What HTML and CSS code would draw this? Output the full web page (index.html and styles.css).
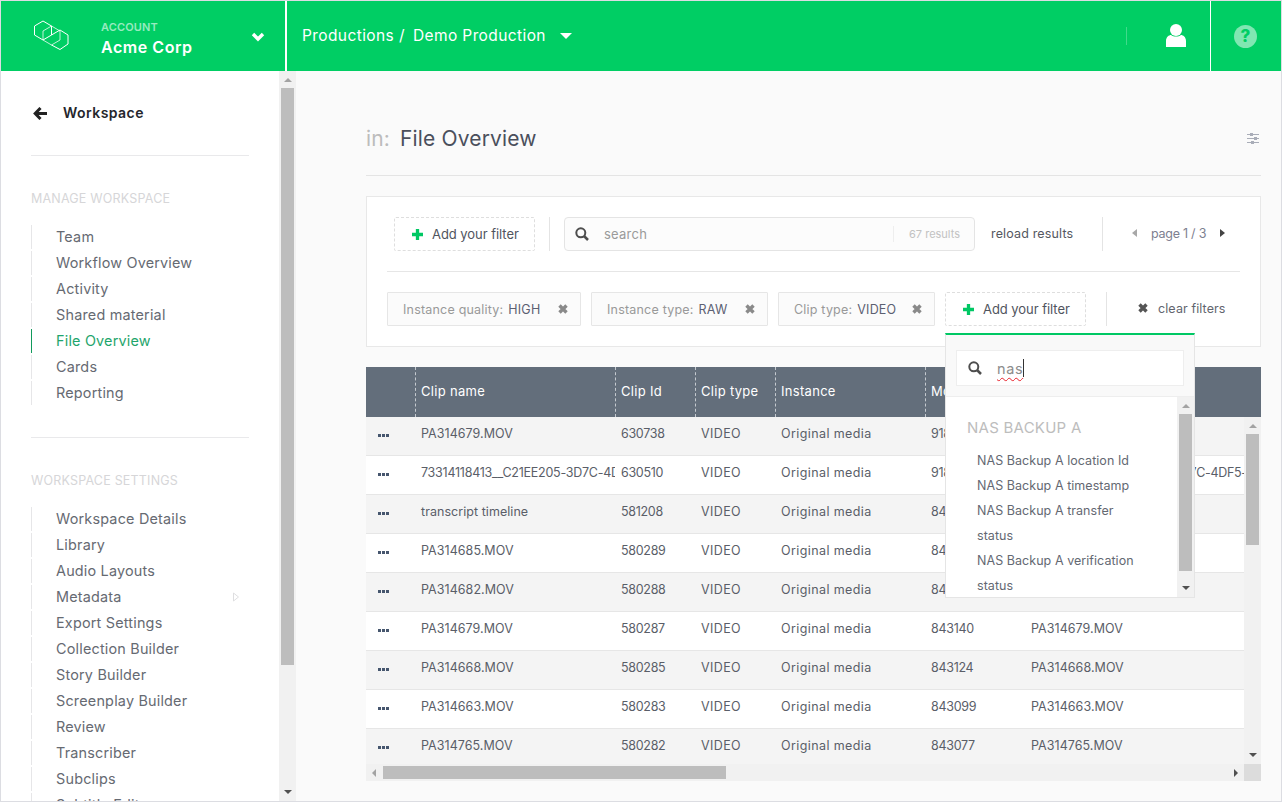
FILE: index.html
```html
<!DOCTYPE html>
<html lang="en">
<head>
<meta charset="utf-8">
<title>File Overview</title>
<link rel="stylesheet" href="styles.css">
</head>
<body>
<div class="app">
  <header class="topbar">
    <div class="account">
      <svg class="logo" viewBox="32 20 38 33" width="38" height="33"><g fill="none" stroke="#fff" stroke-width="1"><path d="M34.5 27L43 22l8.500 5v9L43 41l-8.500-5z"/><path d="M43 32l8.500-5 8.500 5v9l-8.500 5L43 41z" stroke-opacity=".75"/><path d="M51.500 36l8.500-5 8 5v9l-8 5.500-8.500-4.500" /></g></svg>
      <div class="account-text">
        <div class="account-label">ACCOUNT</div>
        <div class="account-name">Acme Corp</div>
      </div>
      <svg class="chev" viewBox="0 0 14 10" width="14" height="10"><path d="M2 2l5 5 5-5" fill="none" stroke="#fff" stroke-width="3.400"/></svg>
    </div>
    <nav class="crumbs">
      <span class="crumb">Productions /</span>
      <span class="crumb crumb-current">Demo Production</span>
      <span class="caret"></span>
    </nav>
    <div class="top-right">
      <span class="thin-rule"></span>
      <svg class="user" viewBox="0 0 20 23" width="20" height="23"><circle cx="10" cy="6" r="6" fill="#fff"/><path d="M0 23v-6c0-4 3-6 5-6 1.500 1 3 1.500 5 1.500s3.500-.5 5-1.500c2 0 5 2 5 6v6z" fill="#fff"/></svg>
      <div class="help"><span class="help-dot">?</span></div>
    </div>
  </header>

  <div class="content">
    <aside class="sidebar">
      <div class="side-inner">
        <div class="back">
          <svg viewBox="0 0 14 13" width="14" height="13"><path d="M7.500 1L2.200 6.500l5.300 5.500M2.500 6.500H14" fill="none" stroke="#222" stroke-width="3"/></svg>
          <span>Workspace</span>
        </div>
        <div class="side-head">MANAGE WORKSPACE</div>
        <ul class="side-list">
          <li>Team</li><li>Workflow Overview</li><li>Activity</li><li>Shared material</li>
          <li class="active">File Overview</li><li>Cards</li><li>Reporting</li>
        </ul>
        <div class="side-head side-head-2">WORKSPACE SETTINGS</div>
        <ul class="side-list">
          <li>Workspace Details</li><li>Library</li><li>Audio Layouts</li>
          <li>Metadata<svg class="sub-arrow" viewBox="0 0 7 10" width="7" height="10"><path d="M.5 1l5 4-5 4z" fill="none" stroke="#dedee0"/></svg></li>
          <li>Export Settings</li><li>Collection Builder</li><li>Story Builder</li><li>Screenplay Builder</li>
          <li>Review</li><li>Transcriber</li><li>Subclips</li><li>Subtitle Editor</li>
        </ul>
      </div>
      <div class="vbar">
        <span class="arr arr-up"></span><span class="thumb thumb-side"></span><span class="fill"></span><span class="arr arr-down"></span>
      </div>
    </aside>

    <main class="main">
      <div class="title-row">
        <h1 class="title"><span class="title-in">in:</span> File Overview</h1>
        <svg class="sliders" viewBox="0 0 12 11" width="12" height="11"><g fill="#a9adb8"><path d="M0 1.500h12M0 5.500h12M0 9.500h12" stroke="#a9adb8" stroke-width="1" fill="none"/><rect x="3" y="0" width="3" height="3"/><rect x="7" y="4" width="3" height="3"/><rect x="4" y="8" width="3" height="3"/></g></svg>
      </div>

      <section class="panel">
        <div class="panel-top">
          <div class="add-filter">
            <svg class="plus" viewBox="0 0 10 10" width="11" height="11"><path d="M5 0v10M0 5h10" stroke="#00c864" stroke-width="3"/></svg>
            <span>Add your filter</span>
          </div>
          <span class="vrule vrule-a"></span>
          <div class="search">
            <svg class="mag" viewBox="0 0 14 14" width="14" height="14"><circle cx="5.800" cy="5.800" r="4.500" fill="none" stroke="#4e4e4e" stroke-width="2"/><path d="M9 9l4 4" stroke="#4e4e4e" stroke-width="2.500"/></svg>
            <span class="search-ph">search</span>
            <span class="search-count">67 results</span>
          </div>
          <span class="reload">reload results</span>
          <span class="vrule vrule-b"></span>
          <div class="pager">
            <span class="tri tri-left tri-dim"></span>
            <span class="page-text">page 1 / 3</span>
            <span class="tri tri-right"></span>
          </div>
        </div>
        <div class="panel-bottom">
          <div class="chip chip-a"><span class="chip-key">Instance quality:</span><span class="chip-val">HIGH</span><svg class="x x-grey" viewBox="0 0 10 10" width="10" height="10"><path d="M1.500 1.500l7 7M8.500 1.500l-7 7"/></svg></div>
          <div class="chip chip-b"><span class="chip-key">Instance type:</span><span class="chip-val">RAW</span><svg class="x x-grey" viewBox="0 0 10 10" width="10" height="10"><path d="M1.500 1.500l7 7M8.500 1.500l-7 7"/></svg></div>
          <div class="chip chip-c"><span class="chip-key">Clip type:</span><span class="chip-val">VIDEO</span><svg class="x x-grey" viewBox="0 0 10 10" width="10" height="10"><path d="M1.500 1.500l7 7M8.500 1.500l-7 7"/></svg></div>
          <div class="add-filter">
            <svg class="plus" viewBox="0 0 10 10" width="11" height="11"><path d="M5 0v10M0 5h10" stroke="#00c864" stroke-width="3"/></svg>
            <span>Add your filter</span>
          </div>
          <span class="vrule vrule-c"></span>
          <div class="clear">
            <svg class="x x-dark" viewBox="0 0 10 10" width="10" height="10"><path d="M1.500 1.500l7 7M8.500 1.500l-7 7"/></svg>
            <span>clear filters</span>
          </div>
        </div>

        <div class="popover">
          <div class="pop-search">
            <div class="pop-input">
              <svg class="mag" viewBox="0 0 14 14" width="14" height="14"><circle cx="5.800" cy="5.800" r="4.500" fill="none" stroke="#4e4e4e" stroke-width="2"/><path d="M9 9l4 4" stroke="#4e4e4e" stroke-width="2.500"/></svg>
              <span class="typed">nas</span><span class="text-caret"></span>
            </div>
          </div>
          <div class="pop-list">
            <div class="pop-items">
              <div class="pop-head">NAS BACKUP A</div>
              <div class="pop-item">NAS Backup A location Id</div>
              <div class="pop-item">NAS Backup A timestamp</div>
              <div class="pop-item">NAS Backup A transfer status</div>
              <div class="pop-item">NAS Backup A verification status</div>
            </div>
            <div class="vbar vbar-pop">
              <span class="arr arr-up"></span><span class="thumb thumb-pop"></span><span class="fill"></span><span class="arr arr-down"></span>
            </div>
          </div>
        </div>
      </section>

      <section class="table">
        <div class="t-head">
          <div class="th th-first"></div>
          <div class="th">Clip name</div><div class="th">Clip Id</div><div class="th">Clip type</div>
          <div class="th">Instance</div><div class="th">Mob Id</div><div class="th th-last">Instance name</div>
        </div>
        <div class="t-mid">
          <div class="t-body">
            <div class="tr"><div class="td"><span class="dots"></span></div><div class="td">PA314679.MOV</div><div class="td">630738</div><div class="td">VIDEO</div><div class="td">Original media</div><div class="td">918442</div><div class="td">PA314679.MOV</div></div>
            <div class="tr"><div class="td"><span class="dots"></span></div><div class="td td-long">73314118413__C21EE205-3D7C-4DF5-A1B2</div><div class="td">630510</div><div class="td">VIDEO</div><div class="td">Original media</div><div class="td">918431</div><div class="td td-long">73314118413__C21EE205-3D7C-4DF5-A1B2</div></div>
            <div class="tr"><div class="td"><span class="dots"></span></div><div class="td">transcript timeline</div><div class="td">581208</div><div class="td">VIDEO</div><div class="td">Original media</div><div class="td">843310</div><div class="td">transcript timeline reedited.</div></div>
            <div class="tr"><div class="td"><span class="dots"></span></div><div class="td">PA314685.MOV</div><div class="td">580289</div><div class="td">VIDEO</div><div class="td">Original media</div><div class="td">843160</div><div class="td">PA314685.MOV</div></div>
            <div class="tr"><div class="td"><span class="dots"></span></div><div class="td">PA314682.MOV</div><div class="td">580288</div><div class="td">VIDEO</div><div class="td">Original media</div><div class="td">843152</div><div class="td">PA314682.MOV</div></div>
            <div class="tr"><div class="td"><span class="dots"></span></div><div class="td">PA314679.MOV</div><div class="td">580287</div><div class="td">VIDEO</div><div class="td">Original media</div><div class="td">843140</div><div class="td">PA314679.MOV</div></div>
            <div class="tr"><div class="td"><span class="dots"></span></div><div class="td">PA314668.MOV</div><div class="td">580285</div><div class="td">VIDEO</div><div class="td">Original media</div><div class="td">843124</div><div class="td">PA314668.MOV</div></div>
            <div class="tr"><div class="td"><span class="dots"></span></div><div class="td">PA314663.MOV</div><div class="td">580283</div><div class="td">VIDEO</div><div class="td">Original media</div><div class="td">843099</div><div class="td">PA314663.MOV</div></div>
            <div class="tr"><div class="td"><span class="dots"></span></div><div class="td">PA314765.MOV</div><div class="td">580282</div><div class="td">VIDEO</div><div class="td">Original media</div><div class="td">843077</div><div class="td">PA314765.MOV</div></div>
          </div>
          <div class="vbar vbar-table">
            <span class="arr arr-up"></span><span class="thumb thumb-table"></span><span class="fill"></span><span class="arr arr-down"></span>
          </div>
        </div>
        <div class="t-foot">
          <div class="hbar">
            <span class="arr arr-left"></span><span class="hthumb"></span><span class="fill"></span><span class="arr arr-right"></span>
          </div>
          <div class="corner"></div>
        </div>
      </section>
    </main>
  </div>
</div>
</body>
</html>
```

FILE: styles.css
```css
* { box-sizing: border-box; }
html, body { margin: 0; padding: 0; height: 100%; overflow: hidden; }
body { font-family: Inter, "Open Sans", "Liberation Sans", sans-serif; color: #5a5e68; background: #fafafa; }
ul { list-style: none; margin: 0; padding: 0; }

.app { width: 1282px; height: 802px; border: 1px solid #dcdde2; display: flex; flex-direction: column; overflow: hidden; }

/* top bar */
.topbar { height: 70px; flex: none; background: #00ce64; display: flex; color: #fff; }
.account { width: 286px; flex: none; display: flex; align-items: center; padding-left: 31px; border-right: 2px solid #fff; }
.logo { flex: none; margin-right: 31px; margin-top: -1px; }
.account-text { width: 150px; flex: none; margin-top: 6px; }
.account-label { font-size: 11px; font-weight: 600; line-height: 14px; color: rgba(255,255,255,.6); letter-spacing: .15px; }
.account-name { font-size: 16px; font-weight: 600; line-height: 22px; margin-top: 2px; letter-spacing: .55px; }
.chev { flex: none; margin-top: 2px; }
.crumbs { display: flex; align-items: center; padding: 0 0 2px 15px; font-size: 15.500px; letter-spacing: .4px; }
.crumb { white-space: nowrap; }
.crumb-current { margin-left: 8px; }
.caret { margin-left: 14px; margin-top: 2px; width: 0; height: 0; border-left: 6px solid transparent; border-right: 6px solid transparent; border-top: 6px solid #fff; }
.top-right { margin-left: auto; display: flex; align-items: center; }
.thin-rule { width: 1px; height: 18px; background: rgba(255,255,255,.25); margin-right: 39px; }
.user { margin-right: 24px; margin-top: -1px; }
.help { width: 71px; height: 70px; border-left: 1px solid #fff; display: flex; align-items: center; justify-content: center; padding-right: 1px; }
.help-dot { width: 23px; height: 23px; border-radius: 50%; background: rgba(255,255,255,.5); color: #00ce64; font-size: 17px; font-weight: 800; line-height: 23px; text-align: center; }

.content { flex: 1; display: flex; min-height: 0; }

/* sidebar */
.sidebar { width: 295px; flex: none; display: flex; background: #fff; }
.side-inner { width: 278px; flex: none; overflow: hidden; padding: 0 30px; }
.back { height: 85px; padding-top: 31px; border-bottom: 1px solid #e9e9eb; display: flex; align-items: flex-start; font-size: 14px; font-weight: 600; color: #25262c; line-height: 22px; letter-spacing: .45px; }
.back svg { margin: 5px 16px 0 2px; flex: none; }
.side-head { font-size: 12.500px; color: #d6d6d8; line-height: 16px; margin-top: 35px; margin-bottom: 18px; white-space: nowrap; letter-spacing: .2px; }
.side-head-2 { border-top: 1px solid #e9e9eb; margin-top: 32px; padding-top: 35px; }
.side-list li { position: relative; height: 24px; margin-bottom: 2px; border-left: 1px solid #e6e6e8; padding-left: 24px; font-size: 14.400px; line-height: 24px; color: #666a72; white-space: nowrap; letter-spacing: .2px; }
.side-list li.active { border-left-color: #129a5c; color: #1fa56c; }
.sub-arrow { position: absolute; right: 9px; top: 7px; }

/* scrollbars */
.vbar { width: 17px; flex: none; background: #f1f1f1; display: flex; flex-direction: column; align-items: center; }
.fill { flex: 1; }
.thumb { width: 13px; flex: none; background: #bdbdbd; }
.thumb-side { height: 577px; }
.thumb-pop { height: 157px; }
.thumb-table { height: 111px; }
.arr { flex: none; width: 0; height: 0; }
.arr-up { margin: 7px 0 6px; border-left: 4px solid transparent; border-right: 4px solid transparent; border-bottom: 4px solid #a3a3a3; }
.arr-down { margin: 6px 0 7px; border-left: 4px solid transparent; border-right: 4px solid transparent; border-top: 4px solid #505050; }
.arr-left { margin: 0 7px 0 6px; border-top: 4px solid transparent; border-bottom: 4px solid transparent; border-right: 4px solid #a3a3a3; }
.arr-right { margin: 0 6px 0 7px; border-top: 4px solid transparent; border-bottom: 4px solid transparent; border-left: 4px solid #505050; }

/* main */
.main { flex: 1; min-width: 0; padding: 0 20px 0 70px; background: #fafafa; }
.title-row { height: 105px; padding-top: 53px; border-bottom: 1px solid #e4e4e4; display: flex; justify-content: space-between; }
.title { margin: 0; font-size: 21px; font-weight: 400; line-height: 30px; color: #4a4f5c; letter-spacing: .15px; }
.title-in { color: #bcbcbc; margin-right: 4px; }
.sliders { margin: 9px 2px 0 0; }

.panel { position: relative; margin-top: 20px; height: 151px; padding: 20px; background: #fff; border: 1px solid #e8e8e8; }
.panel-top { height: 55px; padding: 0 0 0 7px; display: flex; align-items: flex-start; border-bottom: 1px solid #e6e6e6; }
.panel-bottom { margin-top: 20px; height: 34px; display: flex; align-items: flex-start; }
.add-filter { width: 141px; height: 34px; flex: none; border: 1px dashed #dedede; border-radius: 2px; display: flex; align-items: center; padding-left: 17px; font-size: 13px; color: #50545e; white-space: nowrap; letter-spacing: -.05px; }
.plus { flex: none; margin-right: 9px; }
.vrule { width: 1px; height: 34px; flex: none; background: #e4e4e4; }
.vrule-a { margin: 0 14px; }
.search { width: 411px; height: 34px; flex: none; display: flex; align-items: center; padding: 0 14px 0 10px; background: #fcfcfc; border: 1px solid #e4e4e4; border-radius: 4px; font-size: 13px; }
.mag { flex: none; }
.search-ph { color: #9a9a9a; margin-left: 15px; letter-spacing: .25px; }
.search-count { margin-left: auto; font-size: 11px; color: #c2c2c2; border-left: 1px solid #eee; padding-left: 15px; line-height: 16px; white-space: nowrap; }
.reload { margin-left: 16px; width: 95px; flex: none; font-size: 12.500px; line-height: 34px; color: #55585f; white-space: nowrap; letter-spacing: .15px; }
.vrule-b { margin: 0 29px 0 16px; }
.pager { display: flex; align-items: center; height: 32px; font-size: 12.500px; color: #7d8090; white-space: nowrap; letter-spacing: -.25px; }
.tri { width: 0; height: 0; flex: none; border-top: 4px solid transparent; border-bottom: 4px solid transparent; }
.tri-left { border-right: 5px solid #555; }
.tri-dim { border-right-color: #a8a8a8; }
.tri-right { border-left: 5px solid #444; margin-left: 14px; }
.page-text { margin-left: 14px; width: 55px; }

.chip { height: 34px; flex: none; margin-right: 10px; display: flex; align-items: center; padding-left: 15px; background: #fbfbfb; border: 1px solid #e6e6e6; border-radius: 1px; font-size: 12.500px; white-space: nowrap; letter-spacing: .2px; }
.chip-a { width: 194px; }
.chip-b { width: 177px; }
.chip-c { width: 157px; }
.chip-key { color: #999; margin-right: 5px; }
.chip-val { color: #5c6072; }
.x { fill: none; stroke-width: 3.400; flex: none; }
.x-grey { stroke: #8a8a8a; margin-left: auto; margin-right: 12px; }
.x-dark { stroke: #555; margin-right: 10px; }
.vrule-c { margin: 0 0 0 20px; }
.clear { display: flex; align-items: center; height: 32px; margin-left: 31px; font-size: 12.500px; color: #62656e; white-space: nowrap; letter-spacing: .1px; }

/* popover */
.popover { position: absolute; left: 578px; top: 136px; width: 250px; height: 265px; z-index: 5; background: #f9f9f9; border: 1px solid #e5e5e5; border-top: 2px solid #00c864; display: flex; flex-direction: column; }
.pop-search { height: 62px; flex: none; padding: 15px 10px 10px; border-bottom: 1px solid #eee; }
.pop-input { height: 36px; background: #fff; border: 1px solid #eee; display: flex; align-items: center; padding-left: 11px; font-size: 14.500px; color: #8c8c8c; }
.typed { margin-left: 15px; text-decoration: underline wavy #e8222c 1px; text-underline-offset: 3px; letter-spacing: .6px; }
.text-caret { width: 1px; height: 18px; background: #333; }
.pop-list { flex: 1; min-height: 0; display: flex; background: #fff; }
.pop-items { flex: 1; min-width: 0; overflow: hidden; padding: 18px 30px 0 21px; }
.pop-head { font-size: 15px; color: #bdbdbd; line-height: 26px; margin-bottom: 7px; letter-spacing: .25px; white-space: nowrap; }
.pop-item { padding-left: 10px; font-size: 12.500px; line-height: 25px; color: #646872; letter-spacing: .05px; }

/* table */
.table { margin-top: 20px; height: 414px; display: flex; flex-direction: column; background: #fff; }
.t-head, .tr { display: grid; grid-template-columns: 49px 200px 80px 80px 150px 100px 1fr; }
.t-head { height: 50px; flex: none; background: #636e7b; color: #fff; font-size: 13px; letter-spacing: .3px; }
.th { border-left: 1px dashed #c5cad0; padding-left: 5px; line-height: 49px; white-space: nowrap; overflow: hidden; }
.th-first, .th-last { border-left: 0; }
.th-last { padding-left: 6px; }
.t-mid { flex: 1; min-height: 0; display: flex; }
.t-body { flex: 1; min-width: 0; overflow: hidden; }
.tr { height: 39px; border-bottom: 1px solid #e6e6e6; background: #fff; font-size: 12.500px; color: #5a5e68; letter-spacing: .05px; }
.tr:nth-child(odd) { background: #f4f4f4; }
.td { padding-left: 6px; line-height: 33px; white-space: nowrap; overflow: hidden; }
.td:first-child { padding-left: 12px; overflow: visible; }
.td:nth-child(3), .td:nth-child(6) { letter-spacing: -.3px; }
.td:nth-child(4) { letter-spacing: .4px; }
.td:nth-child(5) { letter-spacing: .4px; }
.td:nth-child(2).td-long { letter-spacing: -.25px; }
.td:nth-child(7).td-long { letter-spacing: -.35px; }
.dots { display: block; width: 3px; height: 3px; margin-top: 17px; background: #46566e; box-shadow: 4px 0 #46566e, 8px 0 #46566e; }
.t-foot { height: 17px; flex: none; display: flex; }
.hbar { flex: 1; display: flex; align-items: center; background: #f1f1f1; }
.hthumb { width: 343px; height: 13px; flex: none; background: #bdbdbd; }
.corner { width: 17px; flex: none; background: #dcdcdc; }
```
